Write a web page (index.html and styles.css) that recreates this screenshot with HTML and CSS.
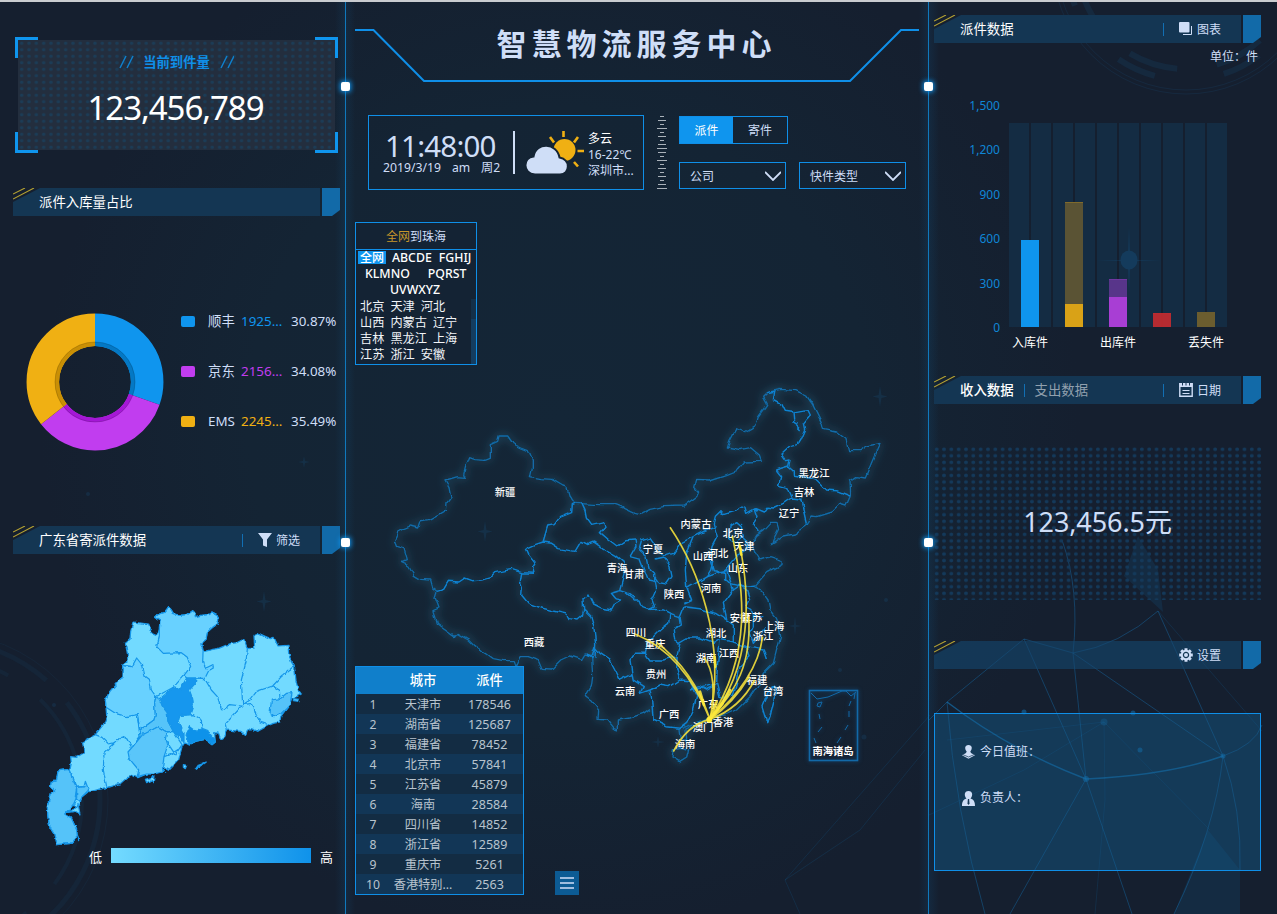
FILE: index.html
```html
<!DOCTYPE html>
<html lang="zh">
<head>
<meta charset="utf-8">
<title>智慧物流服务中心</title>
<link rel="stylesheet" href="styles.css">
</head>
<body>
<svg class="backdrop" viewBox="0 0 1277 914" width="1277" height="914" fill="none">
  <g stroke="#1b6fa8" stroke-opacity=".13">
    <circle cx="1186" cy="-40" r="134"/><circle cx="1186" cy="-40" r="130"/>
    <circle cx="1186" cy="-40" r="120" stroke-width="6" stroke-dasharray="40 70"/>
    <circle cx="1186" cy="-40" r="109" stroke-width="6" stroke-dasharray="50 40"/>
    <circle cx="-60" cy="800" r="160" stroke-width="5" stroke-dasharray="150 30" stroke-opacity=".08"/>
    <circle cx="-60" cy="800" r="142" stroke-width="4" stroke-dasharray="90 40" stroke-opacity=".08"/>
    <circle cx="-60" cy="800" r="168" stroke-opacity=".08"/>
  </g>
  <path d="M1208 830 1240 870V914H1174ZM1138 536 1158 570 1163 612 1124 576Z" fill="#126aa8" fill-opacity=".16"/>
  <path d="M947 702 1024 639 1073 653Q1120 645 1158 611M1024 639 1086 779 1073 653 1223 756M929 720 947 702Q955 810 985 914M1086 779 1010 914M1086 779 1132 914M1223 756Q1255 745 1262 725M1223 756Q1242 810 1240 870M1223 756Q1215 830 1174 914M1073 653Q1080 590 1062 540M1158 611 1223 756" stroke="#1479bd" stroke-opacity=".38"/>
  <path d="M785 880 930 715M785 880 860 830 925 750M785 880 800 914M1158 611 1262 731M1104 722 1105 800 1095 914M1104 722 1024 770 929 815M1104 722 1210 830M947 740 1104 722" stroke="#1479bd" stroke-opacity=".16"/>
  <path d="M947 702Q1010 750 1086 779Q1170 775 1223 756" stroke="#1479bd" stroke-opacity=".6" stroke-width="1.500"/>
  <g fill="#1479bd" fill-opacity=".5"><circle cx="1086" cy="779" r="3"/><circle cx="1223" cy="756" r="2.5"/><circle cx="1024" cy="712" r="2.5"/><circle cx="1133" cy="713" r="2.5"/><circle cx="1140" cy="750" r="2.5"/><circle cx="1104" cy="722" r="3.5" fill-opacity=".3"/></g>
  <g fill="#1b76b5" fill-opacity=".14"><path d="M264 591l1.500 9 6 1.500-6 1.500-1.500 9-1.500-9-6-1.500 6-1.500ZM485 521l1.500 9 6 1.500-6 1.500-1.500 9-1.500-9-6-1.500 6-1.500ZM880 386l1.500 9 6 1.500-6 1.500-1.500 9-1.500-9-6-1.500 6-1.500ZM304 456l1 5 5 1-5 1-1 5-1-5-5-1 5-1ZM795 616l1 9 6 1-6 1-1 9-1-9-6-1 6-1ZM658 736l1 5 6 1-6 1-1 5-1-5-6-1 6-1Z"/><circle cx="54" cy="705" r="2"/><circle cx="88" cy="494" r="2"/><circle cx="864" cy="737" r="2.500"/><circle cx="840" cy="670" r="2"/><circle cx="886" cy="600" r="2"/></g>
</svg>

<main class="board">
  <section class="side left">
    <div class="total">
      <i class="corner tl"></i><i class="corner tr"></i><i class="corner bl"></i><i class="corner br"></i>
      <div class="total-body">
        <div class="total-title"><svg width="16" height="14"><path d="M1 13 7 1M8 13 14 1" stroke="#0f7fcb" stroke-width="1.500"/></svg><b>当前到件量</b><svg width="16" height="14"><path d="M3 13 9 1M10 13 16 1" stroke="#0f7fcb" stroke-width="1.500"/></svg></div>
        <div class="total-num">123,456,789</div>
      </div>
    </div>

    <header class="head gap-ratio">
      <div class="head-bar"><span>派件入库量占比</span></div><i class="head-tab"></i>
      <svg class="ticks" width="24" height="14"><path d="M0 6 12 0M0 11 21 0" stroke="#b5a232" stroke-width="1.100"/></svg>
    </header>
    <div class="ratio">
      <svg class="donut" width="138" height="138" viewBox="-69 -69 138 138" fill="none">
        <g transform="rotate(-90)" stroke-width="32.500">
          <circle r="52.200" pathLength="360" stroke="#0f95ee" stroke-dasharray="109.500 360"/>
          <circle r="52.200" pathLength="360" stroke="#c13def" stroke-dasharray="122.500 360" stroke-dashoffset="-109.500"/>
          <circle r="52.200" pathLength="360" stroke="#f0b013" stroke-dasharray="128 360" stroke-dashoffset="-232"/>
        </g>
        <g transform="rotate(-90)" stroke-width="4.200">
          <circle r="38" pathLength="360" stroke="#0478c4" stroke-dasharray="109.500 360"/>
          <circle r="38" pathLength="360" stroke="#a517d6" stroke-dasharray="122.500 360" stroke-dashoffset="-109.500"/>
          <circle r="38" pathLength="360" stroke="#c98f05" stroke-dasharray="128 360" stroke-dashoffset="-232"/>
        </g>
        <circle r="40" stroke="#000" stroke-opacity=".2" stroke-width=".8"/>
      </svg>
      <ul class="legend">
        <li class="blue"><i></i><span>顺丰</span><em>1925...</em><b>30.87%</b></li>
        <li class="purple"><i></i><span>京东</span><em>2156...</em><b>34.08%</b></li>
        <li class="amber"><i></i><span>EMS</span><em>2245...</em><b>35.49%</b></li>
      </ul>
    </div>

    <header class="head">
      <div class="head-bar"><span>广东省寄派件数据</span>
        <div class="tool"><svg width="14" height="14" viewBox="0 0 14 14"><path d="M0 0H14L9 6.500V14L5 12.500V6.500Z" fill="#cfdef7"/></svg><span>筛选</span></div>
      </div><i class="head-tab"></i>
      <svg class="ticks" width="24" height="14"><path d="M0 6 12 0M0 11 21 0" stroke="#b5a232" stroke-width="1.100"/></svg>
    </header>
    <svg class="gd" width="320" height="258" viewBox="0 0 960 774" stroke="#1496ea" stroke-width="3.600" stroke-linejoin="round">
      <g filter="url(#rough)">
      <path fill="#72daff" d="M416 50 424 60 430 70 450 76 472 74 488 62 494 68 496 80 516 76 534 74 546 66 562 74 566 90 562 102 548 112 532 126 528 148 512 162 520 168 524 184 548 178 564 176 588 166 604 160 620 158 636 150 646 158 652 176 674 174 672 136 686 130 704 138 722 146 732 142 744 168 774 166 776 190 784 216 794 232 798 272 804 298 814 312 800 320 786 324 774 350 752 380 750 396 730 400 712 408 684 424 664 416 652 424 648 434 632 424 610 422 592 420 584 440 572 448 566 430 554 428 556 456 546 464 524 448 500 454 478 462 466 456 456 470 446 510 420 538 402 530 400 544 386 546 372 552 350 552 322 564 308 556 288 566 272 580 232 592 208 598 174 606 154 622 150 644 142 650 128 646 108 668 104 672 124 684 140 720 142 740 124 760 78 764 72 732 60 712 54 682 52 650 62 606 74 604 62 590 64 572 80 570 84 542 120 538 124 520 122 500 140 502 162 488 158 456 196 434 220 404 230 378 228 352 226 330 240 304 260 280 276 262 278 226 294 214 292 190 286 160 300 148 302 124 310 96 356 102 366 128 380 134 388 120 390 90 376 82 384 74 402 68Z"/>
      <path fill="#67d1ff" d="M416 50 424 60 430 70 450 76 472 74 488 62 494 68 496 80 516 76 534 74 546 66 562 74 566 90 562 102 548 112 532 126 528 148 512 162 520 168 518 216 528 234 548 224 550 234 536 242 524 266 498 264 470 264 462 256 482 230 472 202 454 188 400 190 380 170 388 140 388 120 390 90 376 82 384 74 402 68Z"/>
      <path fill="#67d1ff" d="M278 226 306 230 320 204 334 222 342 256 358 268 364 300 378 320 374 340 376 376 372 390 330 420 322 374 290 380 256 370 228 352 226 330 240 304 260 280 276 262Z"/>
      <path fill="#57c4f9" d="M378 320 392 330 398 350 412 368 414 394 430 424 410 426 384 410 350 430 332 432 330 420 372 390 376 376 374 340Z"/>
      <path fill="#1997ee" d="M470 264H498L496 280 478 300 488 326 490 344 480 374 450 376 444 396 462 428 462 458 446 436 430 424 414 394 412 368 398 350 388 328 430 292 450 298Z"/>
      <path fill="#0f92ea" d="M478 408 500 424 518 416 534 422 540 440 552 444 556 456 546 464 524 448 500 454 478 462 468 436Z"/>
      <path fill="#5ac6fa" d="M384 410 410 426 406 450 412 470 402 500 396 546 372 552 350 552 322 560 326 540 298 506 294 486 308 470 336 436Z"/>
      <path fill="#55c3f9" d="M84 542 120 538 126 566 140 592 140 620 132 640 108 668 104 672 124 684 140 720 142 740 124 760 78 764 72 732 60 712 54 682 52 650 62 606 74 604 62 590 64 572 80 570ZM140 592 162 590 166 574 176 600 154 622 150 634 136 620ZM720 372 724 330 750 326 770 310 786 308 780 344 752 372 732 380Z"/>
      <path fill="none" d="M652 176 648 216 634 270 638 344 660 330 680 304 728 288 752 262 792 228M524 266 544 300 562 320 576 360 598 344 636 348 588 400 592 420M638 344 668 340 676 370 690 396 712 404M728 288 748 300 750 326M450 376 490 374 514 388 516 416M410 426 430 424 456 464 436 494 420 470 408 450M402 500 424 492 456 470M196 434 216 442 236 462 256 458 274 438 290 446 304 470M256 458 222 490 220 540 230 590M120 538 140 592 162 590M322 374 330 440 308 470M378 320 430 292 462 256M498 264 524 266M276 226 306 230"/>
      <path fill="#72daff" d="M346 568 372 560 370 578 362 570 350 578ZM398 536 410 546ZM496 538 506 524 526 516 510 528ZM460 524 470 526 466 536 460 532ZM108 668 140 654 144 640 150 672 136 664ZM790 326 808 328 806 334 790 332ZM144 738 146 752Z"/>
      </g>
    </svg>
    <div class="scale"><span>低</span><i></i><span>高</span></div>
  </section>

  <section class="middle">
    <i class="knob k1"></i><i class="knob k2"></i><i class="knob k3"></i><i class="knob k4"></i>
    <header class="title">
      <svg class="title-line" width="582" height="60" fill="none"><path d="M9 4H27.500L78 55H504L555 4H573" stroke="#0f8fe8" stroke-width="2"/></svg>
      <h1>智慧物流服务中心</h1>
    </header>
    <div class="toolbar">
      <div class="weather">
        <div class="clock"><div class="time">11:48:00</div><div class="date"><span>2019/3/19</span><span>am</span><span>周2</span></div></div>
        <i class="bar"></i>
        <svg class="cloud" width="60" height="46" viewBox="0 0 60 46"><circle cx="39.500" cy="20" r="11" fill="#f0b013"/><path d="M38.500 1v6M52.500 21h6.500M25 7l4 5.500M53 7l-4 5.500M49 32l4 4.500" stroke="#f0b013" stroke-width="2.600"/><path d="M10 44.500C-3 43.500-2 27 8.500 26.500 11 11.500 32 12.500 34.500 27.500 46 29.500 45 44.500 35 44.500Z" fill="#cfdef7" stroke="#142434" stroke-width="2"/></svg>
        <div class="sky"><b>多云</b><span>16-22℃</span><span>深圳市...</span></div>
      </div>
      <svg class="ruler" width="10" height="76" stroke="#aab2ba"><path d="M3 1.500h4M1 5.500h8M3 9.500h4M0 13.500h10M3 17.500h4M1 21.500h8M3 25.500h4M1 29.500h8M0 33.500h10M1 37.500h8M3 41.500h4M0 45.500h10M3 49.500h4M1 53.500h8M3 57.500h4M1 61.500h8M3 65.500h4M1 69.500h8M0 73.500h10"/></svg>
      <div class="filters">
        <div class="toggle"><b>派件</b><span>寄件</span></div>
        <div class="selects">
          <div class="select"><span>公司</span><svg width="16" height="10" fill="none"><path d="M0 1 8 9 16 1" stroke="#cfdef7" stroke-width="1.800"/></svg></div>
          <div class="select"><span>快件类型</span><svg width="16" height="10" fill="none"><path d="M0 1 8 9 16 1" stroke="#cfdef7" stroke-width="1.800"/></svg></div>
        </div>
      </div>
    </div>

    <div class="stage">
      <svg class="china" width="582" height="724" viewBox="346 190 582 724" fill="none">
        <defs>
          <filter id="rough" x="-5%" y="-5%" width="110%" height="110%"><feTurbulence type="fractalNoise" baseFrequency=".06" numOctaves="2" seed="4"/><feDisplacementMap in="SourceGraphic" scale="11" xChannelSelector="R" yChannelSelector="G"/></filter>
          <filter id="rough2" x="-5%" y="-5%" width="110%" height="110%"><feTurbulence type="fractalNoise" baseFrequency=".11" numOctaves="1" seed="7"/><feDisplacementMap in="SourceGraphic" scale="6" xChannelSelector="R" yChannelSelector="G"/></filter>
        </defs>
        <g class="borders">
          <g transform="translate(385 380) scale(.33333)">
            <path class="outer" d="M570 370 552 345 546 322 534 318 500 298 468 296 436 290 442 262 442 240 430 212 410 204 385 192 368 168 342 168 338 184 316 194 316 232 300 238 270 236 254 230 242 260 236 284 240 292 215 290 180 300 192 320 198 352 186 368 184 392 160 406 130 422 104 426 98 444 76 438 56 446 38 456 28 480 36 500 54 506 64 542 50 548 72 558 88 586 108 598 134 600 140 622 156 634 150 652 162 684 144 692 154 730 172 744 208 770 216 760 250 780 270 800 300 820 322 836 352 842 388 842 394 860 408 830 430 830 456 840 468 868 500 870 530 840 556 828 590 838 600 822 624 828"/>
            <path class="outer" d="M570 370 640 374 690 374 720 386 750 400 765 404 795 388 835 380 895 378 935 350 941 336 929 322 935 298 975 300 1025 284 1060 270 1080 246 1129 244 1123 228 1097 206 1065 212 1027 204 1035 180 1053 146 1079 156 1113 136 1119 110 1145 74 1133 52 1147 38 1185 28 1233 32 1265 48 1283 74 1311 130 1315 148 1355 156 1383 178 1391 212 1425 212 1447 198 1485 190 1475 212 1459 250 1441 294 1415 290 1395 304 1397 346 1383 378 1363 372 1339 396 1295 410 1281 408 1265 434 1229 462 1197 468 1159 494 1181 450 1175 430 1155 430 1135 452 1115 466 1101 490 1110 516 1125 540 1155 530 1191 542 1191 554 1145 578 1111 616 1135 640 1149 660 1155 690 1175 716 1183 740 1187 770 1175 810 1165 850 1135 880 1115 920 1095 950 1055 990 1025 1004 985 1010 965 1020 935 1030 895 1046"/>
            <path d="M156 634 176 628 190 604 222 606 240 594 262 602 290 600 318 592 332 578 380 568 410 578 444 580 440 562 450 546 432 524 424 506 450 494 474 486 488 438 508 434 524 412 560 398 562 374 570 370M410 578 406 604 412 620 410 646 430 670 470 684 510 694 545 702 552 716 576 720 592 706 596 690 594 654 612 642 626 672 650 684 680 690 690 672 710 660 690 656 676 640 704 632 718 580 716 548 690 526 658 508 626 486 606 494 588 484 570 514 524 506 500 490 474 486M596 690 618 712 626 740 632 790 630 830M590 370 600 392 604 414 620 436 656 428 660 442 646 458 672 480 696 498 720 482 750 480M704 632 730 640 750 656"/>
          </g>
          <g transform="translate(630 380) scale(.33333)">
            <path d="M412 38 434 34 430 60 456 74 466 94 496 98 530 92 538 108 520 130 524 148 510 180 500 196 480 200 456 222 470 242 480 240 476 258 490 270 490 286 540 294 560 300 590 330 620 332 660 348M492 98 494 120 486 128 498 136 502 126M498 136 512 150M436 270 476 258M436 270 452 290 446 316 470 322 484 354 512 358 520 390 530 432M484 354 460 370 430 384 410 382 400 396 376 386 384 410 370 430 388 456M376 386 350 400 344 378 320 392 280 404 270 392 256 406 250 430 262 470 246 500 240 540 250 572 284 576 290 566 320 530 352 510 346 480 334 470M300 440 320 428 334 440 340 470 318 486 298 472ZM284 576 284 596 300 610 340 620 376 616M430 920 408 950 396 980 410 1028 420 1010 432 960 438 925Z"/>
          </g>
          <g transform="translate(520 510) scale(.33333)">
            <path d="M345 90 348 108 330 140 360 148 384 210 404 214 404 190 384 170 378 140 356 120 365 90 390 82 410 110 430 140 460 130 480 100 520 80 560 60 590 50M404 150 430 144 450 170 456 200 440 222 416 218 404 200M520 80 500 130 496 180 500 230 515 270 490 282M580 150 572 180 560 200 500 236M315 248 340 270 360 270 368 290 390 298 404 290 396 270 410 240 406 214M390 298 430 300 450 310 480 320 492 290 540 296 590 310 620 330 640 345 640 396 600 388 580 400 540 384 500 384 472 400M450 310 446 340 420 360 400 380 384 400 376 430M480 320 484 345 460 360 464 390 480 400 472 430 470 470 480 510 510 512 520 540 560 530 590 520 592 470 600 388M376 430 344 430 330 450 336 490 300 508 286 480 270 450 240 430 225 412 215 440 200 432M376 430 390 450 430 450 470 440M480 510 450 530 420 525 390 540 360 550 370 530 340 510 336 490M390 540 395 570 400 630 440 650 480 655M640 396 680 410 690 440 660 470 650 520 640 556 600 560 590 520M520 540 530 560 520 600 500 640 480 655M640 240 660 226 680 240 690 270 680 290 700 310 730 320M640 240 610 280 620 330M700 310 700 350 690 370 700 400 740 350M560 200 600 186 620 180 640 240M680 410 730 420 740 450M510 540 540 530 560 540 580 530"/>
            <path class="outer" d="M215 440 218 500 214 530 196 560 214 574 236 600 234 628 260 630 280 655 292 660 292 630 330 624 370 610 390 596M480 655 484 690 500 690 498 660 540 640M460 716 480 712 506 720 500 744 478 758 456 744Z"/>
          </g>
        </g>
        <g class="inset"><rect x="809.500" y="690.500" width="48" height="70" stroke-width="1.600"/><path d="M811 693 817 699 828 697 842 691H846L851 696 856 692M818 703l4-1-2 5-3-1ZM819 714l1 5M818 732l4-5M814 738l2 5M855 693l-1 6M851 701l-2 5M849 711v6M848 725l-3 5M841 737l-4 6"/></g>
        <g class="labels">
          <text x="505" y="496">新疆</text><text x="534" y="645.500">西藏</text><text x="617" y="572">青海</text><text x="634" y="578">甘肃</text><text x="653" y="552.500">宁夏</text><text x="674" y="597.500">陕西</text><text x="636" y="635.500">四川</text><text x="655" y="647.500">重庆</text><text x="656" y="678">贵州</text><text x="625" y="694.500">云南</text><text x="669" y="717.500">广西</text><text x="696" y="528">内蒙古</text><text x="733" y="537">北京</text><text x="744" y="549.500">天津</text><text x="703" y="559.500">山西</text><text x="718" y="557">河北</text><text x="738" y="571.500">山东</text><text x="711" y="592">河南</text><text x="740" y="622">安徽</text><text x="752" y="620.500">江苏</text><text x="774" y="629.500">上海</text><text x="763" y="639.500">浙江</text><text x="716" y="636.500">湖北</text><text x="706" y="661.500">湖南</text><text x="729" y="656.500">江西</text><text x="757" y="683.500">福建</text><text x="773" y="694.500">台湾</text><text x="708" y="707.500">广东</text><text x="723" y="726">香港</text><text x="703" y="731">澳门</text><text x="685" y="747.500">海南</text><text x="814" y="476.500">黑龙江</text><text x="804" y="495.500">吉林</text><text x="789" y="517">辽宁</text><text class="strong" x="833" y="755">南海诸岛</text>
        </g>
        <g class="flights" transform="translate(630 380) scale(.33333)">
          <path d="M120 442C200 560 290 780 240 1018M307 468C340 620 370 820 240 1018M328 490C360 640 370 860 240 1018M356 710C365 850 320 930 240 1018M398 770Q380 900 240 1018M374 900Q330 985 240 1018M358 890Q310 970 240 1018M15 762Q160 820 240 1018M80 788Q190 870 240 1018M222 832Q265 890 240 1018M130 1115Q170 1035 240 1018"/>
          <path class="trail" d="M330 500l4 24M254 830l2 30M278 970 240 1018M210 935 222 975M300 930Q280 970 240 1018M260 965 240 1018"/>
          <circle cx="238" cy="1019" r="9"/>
        </g>
      </svg>

      <div class="picker">
        <div class="picker-head"><em>全网</em>到珠海</div>
        <div class="picker-body">
          <div class="letters"><b>全网</b><span>ABCDE</span><span>FGHIJ</span></div>
          <div class="letters wide"><span>KLMNO</span><span>PQRST</span></div>
          <div class="letters one"><span>UVWXYZ</span></div>
          <div class="cities"><span>北京</span><span>天津</span><span>河北</span></div>
          <div class="cities"><span>山西</span><span>内蒙古</span><span>辽宁</span></div>
          <div class="cities"><span>吉林</span><span>黑龙江</span><span>上海</span></div>
          <div class="cities"><span>江苏</span><span>浙江</span><span>安徽</span></div>
          <i class="thumb"></i>
        </div>
      </div>

      <table class="rank">
        <thead><tr><th></th><th>城市</th><th>派件</th></tr></thead>
        <tbody>
          <tr><td>1</td><td>天津市</td><td>178546</td></tr>
          <tr><td>2</td><td>湖南省</td><td>125687</td></tr>
          <tr><td>3</td><td>福建省</td><td>78452</td></tr>
          <tr><td>4</td><td>北京市</td><td>57841</td></tr>
          <tr><td>5</td><td>江苏省</td><td>45879</td></tr>
          <tr><td>6</td><td>海南</td><td>28584</td></tr>
          <tr><td>7</td><td>四川省</td><td>14852</td></tr>
          <tr><td>8</td><td>浙江省</td><td>12589</td></tr>
          <tr><td>9</td><td>重庆市</td><td>5261</td></tr>
          <tr><td>10</td><td>香港特别...</td><td>2563</td></tr>
        </tbody>
      </table>
      <button class="menu"><svg width="14" height="12"><path d="M0 1h14M0 6h14M0 11h14" stroke="#cfdef7" stroke-width="1.400"/></svg></button>
    </div>
  </section>

  <section class="side right">
    <header class="head">
      <div class="head-bar"><span>派件数据</span>
        <div class="tool"><svg width="14" height="14" viewBox="0 0 14 14"><path d="M4 12.500H12.500V4" fill="none" stroke="#cfdef7"/><rect width="10.500" height="10.500" rx="1" fill="#cfdef7"/></svg><span>图表</span></div>
      </div><i class="head-tab"></i>
      <svg class="ticks" width="24" height="14"><path d="M0 6 12 0M0 11 21 0" stroke="#b5a232" stroke-width="1.100"/></svg>
    </header>
    <div class="unit">单位<span class="colon">：</span>件</div>
    <div class="chart">
      <div class="yaxis"><span>1,500</span><span>1,200</span><span>900</span><span>600</span><span>300</span><span>0</span></div>
      <div class="plot-col">
        <div class="plot">
          <div class="pair"><div class="stack c-blue" style="height:87px"><i style="height:87px"></i></div></div>
          <div class="pair"><div class="stack c-amber" style="height:125px"><i style="height:23px"></i></div></div>
          <div class="pair"><div class="stack c-purple" style="height:48px"><i style="height:30px"></i></div></div>
          <div class="pair"><div class="stack c-red" style="height:14px"><i style="height:14px"></i></div></div>
          <div class="pair"><div class="stack c-brown" style="height:15px"></div></div>
          <svg class="glint" width="66" height="66" viewBox="-33 -33 66 66"><path d="M0-33 1 0 33 0 1 1 0 33-1 1-33 0-1 0Z"/><ellipse rx="8.500" ry="9.500"/></svg>
        </div>
        <div class="xaxis"><span>入库件</span><span>出库件</span><span>丢失件</span></div>
      </div>
    </div>

    <header class="head">
      <div class="head-bar"><span class="on">收入数据</span><i class="sep"></i><span class="dim">支出数据</span>
        <div class="tool"><svg width="14" height="14" viewBox="0 0 14 14" fill="none" stroke="#cfdef7"><path d="M.800 .800H13.200V13.200H.800Z" stroke-width="1.400"/><path d="M.500 2H13.500" stroke-width="4"/><path d="M3.500 0V2.500M7 0V2.500M10.500 0V2.500" stroke="#143653"/><path d="M3.500 7.500h7M3.500 10.500h7"/></svg><span>日期</span></div>
      </div><i class="head-tab"></i>
      <svg class="ticks" width="24" height="14"><path d="M0 6 12 0M0 11 21 0" stroke="#b5a232" stroke-width="1.100"/></svg>
    </header>
    <div class="income"><span>123,456.5元</span></div>

    <header class="head glass">
      <div class="head-bar">
        <div class="tool bare"><svg width="14" height="14" viewBox="-7 -7 14 14"><path d="M0-6.800V6.800M-6.800 0H6.800M-4.800-4.800 4.800 4.800M-4.800 4.800 4.800-4.800" stroke="#cfdef7" stroke-width="3"/><circle r="5.200" fill="#cfdef7"/><circle r="2.600" fill="#cfdef7" stroke="#143653" stroke-width="1.200"/></svg><span>设置</span></div>
      </div><i class="head-tab"></i>
      <svg class="ticks" width="24" height="14"><path d="M0 6 12 0M0 11 21 0" stroke="#b5a232" stroke-width="1.100"/></svg>
    </header>
    <div class="duty">
      <p><svg width="13" height="14" viewBox="0 0 13 14" fill="#cfdef7"><path d="M6.500 0C10.500 0 10.500 4 8.300 6.500L9 8 13 10.200 6.500 13.800 0 10.200 4 8 4.700 6.500C2.500 4 2.500 0 6.500 0Z"/><path d="M1 9.700 6.500 12 12 9.700" fill="none" stroke="#143653" stroke-width=".7"/></svg><span>今日值班<span class="colon">：</span></span></p>
      <p><svg width="13" height="15" viewBox="0 0 13 15" fill="#cfdef7"><path d="M6.500 0C11 0 11 5 8.500 7.500 12 8.500 13 11 13 15H0C0 11 1 8.500 4.500 7.500 2 5 2 0 6.500 0Z"/><path d="M5.900 8h1.200L7.500 12.500 6.500 14 5.500 12.500Z" fill="#143653"/></svg><span>负责人<span class="colon">：</span></span></p>
    </div>
  </section>
</main>
</body>
</html>
```
FILE: styles.css
```css
* { box-sizing: border-box; margin: 0; padding: 0; }
body {
  width: 1277px; height: 914px; overflow: hidden; position: relative;
  background: radial-gradient(ellipse 520px 520px at 560px 420px, #142637 0%, #142434 60%, #151f2f 100%);
  border-top: 2px solid #c9ccd0;
  color: #cfdef7;
  font: 12px/16px "Noto Sans", "Noto Sans CJK SC", sans-serif;
}
i, em { font-style: normal; }
svg { display: block; flex: none; }
.colon { font-family: "Noto Sans CJK TC", sans-serif; line-height: 1; }
.backdrop { position: absolute; left: 0; top: -2px; }
.board { position: relative; display: flex; width: 1277px; height: 912px; }
.side { display: flex; flex-direction: column; }
.left { width: 345px; padding: 35px 5px 0 13px; background: linear-gradient(90deg, transparent 335px, rgba(15,127,203,.1)); }
.right { width: 348px; padding: 13px 16px 0 5px; background: linear-gradient(270deg, transparent 338px, rgba(15,127,203,.1)); }
.middle {
  position: relative; width: 584px; display: flex; flex-direction: column;
  border-left: 1px solid #1079bd; border-right: 1px solid #1079bd;
  background: linear-gradient(90deg, rgba(15,127,203,.1), transparent 9px, transparent 573px, rgba(15,127,203,.1));
}
.knob { position: absolute; z-index: 2; width: 9px; height: 9px; border-radius: 2px; background: #fff; box-shadow: 0 0 5px 1px #0f95ee; }
.k1, .k3 { left: -5px; }
.k2, .k4 { right: -5px; }
.k1, .k2 { top: 80px; }
.k3, .k4 { top: 536px; }

/* arrival total */
.total { position: relative; width: 323px; height: 116px; margin-left: 2px; padding: 3px; }
.total-body {
  height: 110px; padding-top: 14px; text-align: center;
  background: radial-gradient(circle, rgba(18,80,120,.42) 1.300px, transparent 2px) 0 0 / 7.330px 6.500px, #232e3e;
}
.corner { position: absolute; width: 23px; height: 21px; border: 0 solid #0f95ee; }
.tl { left: 0; top: 0; border-width: 3px 0 0 3px; }
.tr { right: 0; top: 0; border-width: 3px 3px 0 0; }
.bl { left: 0; bottom: 0; border-width: 0 0 3px 3px; }
.br { right: 0; bottom: 0; border-width: 0 3px 3px 0; }
.total-title { display: flex; justify-content: center; align-items: center; gap: 8px; font-size: 13.300px; color: #0f8fe8; }
.total-num { margin-top: 17px; font-size: 33px; line-height: 42px; letter-spacing: -1.050px; padding-right: 2px; color: #fff; }

/* panel heading */
.head { position: relative; display: flex; gap: 2px; width: 327px; height: 28px; flex: none; }
.head-bar { width: 307px; display: flex; align-items: center; padding-left: 26px; font-size: 13.400px; color: #fff; background: #143653; clip-path: polygon(27px 0, 100% 0, 100% 100%, 0 100%, 0 14px); }
.glass .head-bar { background: rgba(20,72,112,.6); }
.head-tab { width: 18px; background: #126aa8; clip-path: polygon(0 0, 100% 0, 100% 22px, 10px 100%, 0 100%); }
.ticks { position: absolute; left: 0; top: 0; }
.tool { margin-left: auto; width: 78px; height: 13px; display: flex; align-items: center; gap: 4px; padding-left: 15px; border-left: 1px solid #126fb3; font-size: 12px; color: #cfdef7; }
.tool span { padding-top: 2px; }
.tool.bare { border-color: transparent; }
.sep { width: 1px; height: 13px; margin: 0 10px; background: #126fb3; }
.on { font-weight: 500; }
.dim { color: #91a0ae; }
.gap-ratio { margin-top: 35px; }

/* ratio */
.ratio { display: flex; height: 310px; padding: 97px 0 0 13px; }
.legend { list-style: none; display: flex; flex-direction: column; gap: 34px; margin: 0 0 0 17px; }
.legend li { display: flex; align-items: center; height: 16px; font-size: 13.400px; white-space: nowrap; }
.legend i { width: 14px; height: 11px; border-radius: 2px; margin-right: 13px; background: var(--c); }
.legend span { width: 33px; }
.legend em { width: 50px; color: var(--c); }
.legend em, .legend b { letter-spacing: 0; font-weight: 400; }
.blue { --c: #0f95ee; }
.purple { --c: #c13def; }
.amber { --c: #f0b013; }

.gd { margin: 36px 0 0 17px; }
.scale { display: flex; align-items: center; gap: 9px; margin-left: 76px; font-size: 13px; color: #fff; }
.scale i { width: 200px; height: 15px; margin-bottom: 2px; background: linear-gradient(90deg, #74dbff, #0f92ea); }

/* title */
.title { position: relative; height: 113px; padding-top: 20px; }
.title-line { position: absolute; left: 0; top: 24px; }
h1 { position: relative; text-align: center; font-size: 30px; line-height: 44px; letter-spacing: 5px; font-weight: 700; padding-right: 1px; }

/* toolbar */
.toolbar { display: flex; height: 75px; padding-left: 22px; }
.weather { display: flex; width: 276px; height: 75px; border: 1px solid #0f8fe8; padding: 15px 0 0 14px; }
.clock { width: 130px; }
.time { padding-left: 2px; font-size: 29.500px; line-height: 29px; letter-spacing: -.800px; }
.date { display: flex; gap: 11px; white-space: nowrap; font-size: 12.200px; }
.bar { width: 2px; height: 43px; background: #cfdef7; }
.cloud { margin-left: 10px; margin-top: -1px; }
.sky { display: flex; flex-direction: column; margin-left: 3px; font-size: 12px; line-height: 16px; white-space: nowrap; }
.sky b { font-weight: 400; color: #fff; }
.ruler { margin-left: 13px; }
.filters { margin-left: 12px; }
.toggle { display: flex; width: 109px; height: 28px; margin-top: 1px; border: 1px solid #0f8fe8; line-height: 28px; text-align: center; }
.toggle b { width: 53px; background: #0f95ee; color: #fff; font-weight: 400; }
.toggle span { flex: 1; }
.selects { display: flex; gap: 13px; margin-top: 18px; }
.select { display: flex; align-items: center; justify-content: space-between; width: 107px; height: 27px; padding: 0 4px 0 10px; border: 1px solid #0f8fe8; }
.select span { padding-top: 2px; }

/* map */
.stage { position: relative; width: 582px; height: 724px; }
.borders path { stroke: #0f82d2; stroke-width: 4.300; stroke-linejoin: round; }
.borders .outer { stroke: #126aa8; stroke-width: 4; }
.borders { filter: url(#rough2) drop-shadow(0 0 4px rgba(15,120,200,.6)); }
.inset { stroke: #1269a8; filter: drop-shadow(0 0 2px rgba(15,120,200,.5)); }
.labels { font-size: 10.300px; font-weight: 500; fill: #fff; text-anchor: middle; }
.strong { font-weight: 700; }
.flights path { stroke: #f8e43b; stroke-opacity: .88; stroke-width: 5; }
.flights .trail { stroke: #ffeb3b; stroke-width: 8; stroke-linecap: round; }
.flights circle { fill: #ffeb3b; }

.picker { position: absolute; left: 9px; top: 32px; width: 122px; height: 143px; border: 1px solid #0f8fe8; background: #142334; }
.picker-head { height: 27px; line-height: 28px; text-align: center; border-bottom: 1px solid #0f8fe8; }
.picker-head em { color: #c8962a; }
.picker-body { position: relative; height: 114px; overflow: hidden; color: #fff; }
.letters { display: flex; gap: 7px; padding-left: 2px; height: 16px; font-weight: 500; white-space: nowrap; font-size: 12.300px; }
.letters b { width: 28px; height: 13px; line-height: 13px; margin-top: 1px; text-align: center; background: #0f95ee; font-weight: 500; font-size: 12px; margin-right: -1px; }
.wide { gap: 18px; padding-left: 9px; }
.one { padding-left: 34px; }
.cities { display: flex; gap: 6px; padding: 1px 0 0 4px; height: 16px; color: #f1f4f8; font-size: 12.200px; }
.thumb { position: absolute; right: 0; top: 49px; width: 5px; height: 66px; background: linear-gradient(#143049 20px, #143d60 20px); }

.rank { position: absolute; left: 9px; top: 476px; width: 169px; height: 229px; border: 1px solid #0f8fe8; border-collapse: separate; border-spacing: 0; table-layout: fixed; text-align: center; background: #132c43; color: #b9c4ce; }
.rank th { height: 27px; padding-bottom: 2px; background: #107fcb; color: #fff; font-size: 13.300px; font-weight: 500; }
.rank th:nth-child(1) { width: 34px; }
.rank th:nth-child(3) { width: 67px; }
.rank td { height: 20px; font-size: 12.200px; line-height: 18px; padding: 2px 0 0; white-space: nowrap; }
.rank td:nth-child(3) { font-size: 12.500px; }
.rank tbody tr:nth-child(even) { background: #123656; }
.menu { position: absolute; left: 209px; top: 681px; width: 24px; height: 24px; border: 0; background: #0c5b94; display: flex; align-items: center; justify-content: center; }

/* bar chart */
.unit { margin-top: 6px; padding-right: 3px; text-align: right; }
.chart { display: flex; height: 311px; padding-top: 33px; }
.yaxis { width: 66px; height: 238px; display: flex; flex-direction: column; justify-content: space-between; text-align: right; color: #0f86d6; }
.plot-col { margin-left: 9px; margin-top: 25px; width: 218px; }
.plot { position: relative; display: flex; gap: 2px; height: 204px; }
.pair { width: 42px; display: flex; align-items: flex-end; justify-content: center; background: linear-gradient(90deg, #142c43 20px, transparent 20px, transparent 22px, #142c43 22px); }
.glint { position: absolute; left: 87px; top: 104px; fill: #14629c; opacity: .28; }
.stack { width: 18px; display: flex; align-items: flex-end; background: color-mix(in srgb, var(--c) 32%, transparent); border-top: 1px solid color-mix(in srgb, var(--c) 25%, transparent); }
.stack i { width: 18px; background: var(--c); opacity: .85; }
.c-blue { --c: #0f95ee; }
.c-blue i { opacity: 1; }
.c-amber { --c: #f0b013; background: #5a5334; }
.c-purple { --c: #b63fe0; background: #58358a; }
.c-red { --c: #c92b2f; }
.c-brown { background: #6b5d2f; }
.xaxis { display: flex; justify-content: space-between; padding: 8px 3px 0; color: #fff; }

.income {
  height: 237px; display: flex; justify-content: center; font-size: 27px; line-height: 30px;
  background: radial-gradient(circle, #14395a 1.500px, transparent 2.100px) -1px 0 / 7.330px 6.550px content-box;
  padding: 42px 0 41px;
}
.income span { padding-top: 61px; letter-spacing: -.100px; }
.duty { margin-top: 44px; height: 158px; padding: 30px 0 0 27px; border: 1px solid #0f8fe8; background: rgba(18,96,146,.42); }
.duty p { display: flex; align-items: center; gap: 5px; height: 16px; margin-bottom: 30px; }
```
